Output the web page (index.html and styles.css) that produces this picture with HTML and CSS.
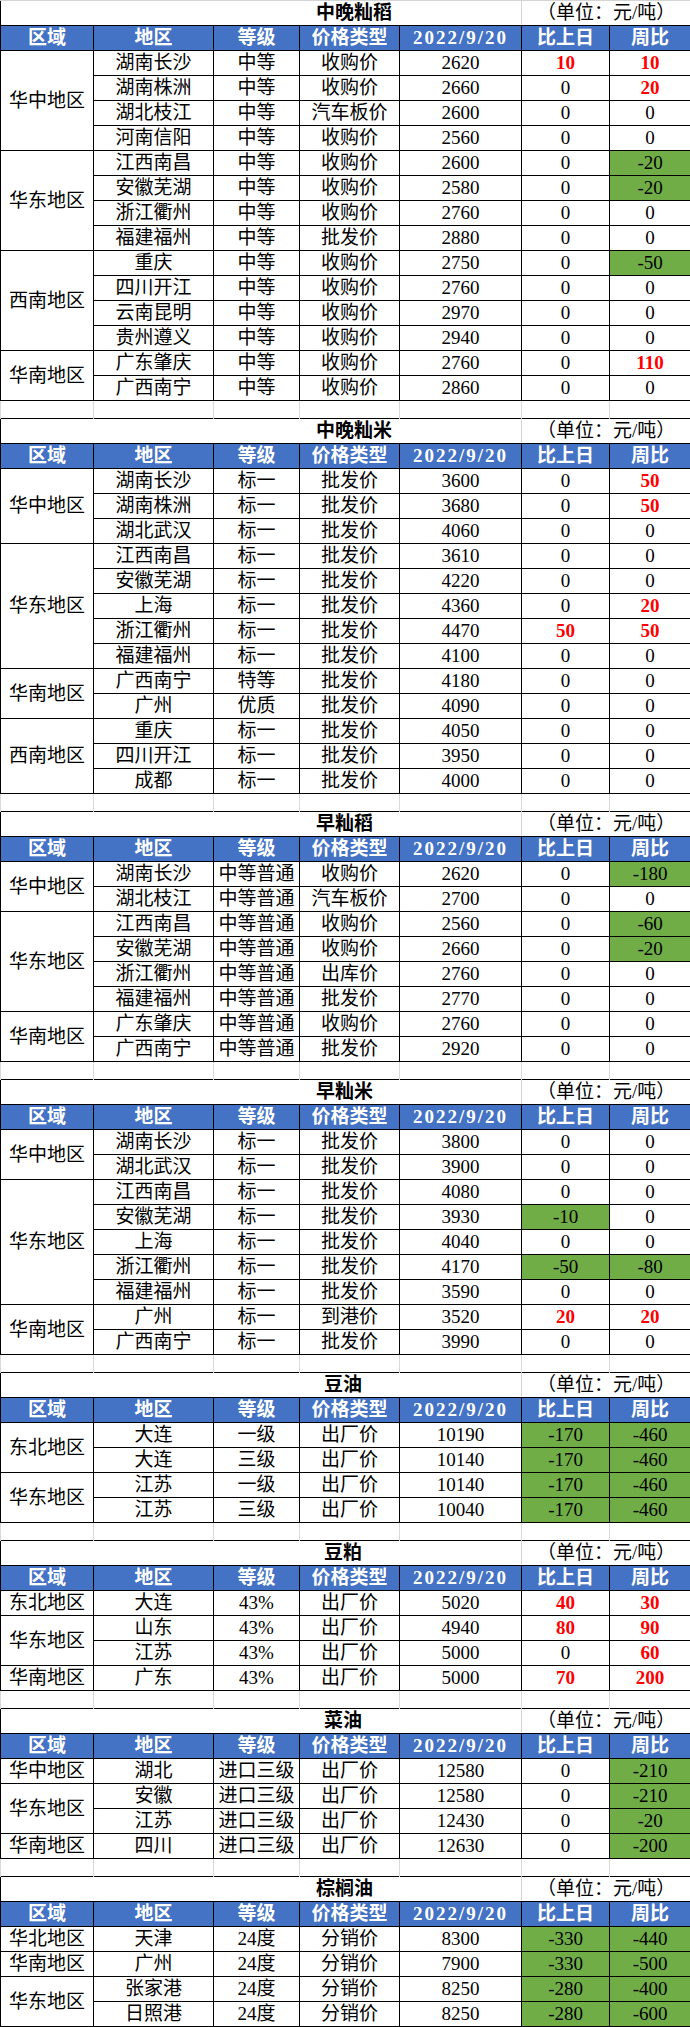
FILE: index.html
```html
<!DOCTYPE html>
<html lang="zh-CN">
<head>
<meta charset="utf-8">
<title>价格表</title>
<link rel="stylesheet" href="styles.css">
</head>
<body>
<table class="sheet">
<colgroup>
<col class="c1"><col class="c2"><col class="c3"><col class="c4"><col class="c5"><col class="c6"><col class="c7">
</colgroup>
<tbody>
<!-- 中晚籼稻 -->
<tr class="ttl first"><td colspan="5" class="name">中晚籼稻</td><td colspan="2" class="unit">（单位：元/吨）</td></tr>
<tr class="hd"><th>区域</th><th>地区</th><th>等级</th><th>价格类型</th><th class="dt">2022/9/20</th><th>比上日</th><th>周比</th></tr>
<tr><td rowspan="4">华中地区</td><td>湖南长沙</td><td>中等</td><td>收购价</td><td>2620</td><td class="up">10</td><td class="up">10</td></tr>
<tr><td>湖南株洲</td><td>中等</td><td>收购价</td><td>2660</td><td>0</td><td class="up">20</td></tr>
<tr><td>湖北枝江</td><td>中等</td><td>汽车板价</td><td>2600</td><td>0</td><td>0</td></tr>
<tr><td>河南信阳</td><td>中等</td><td>收购价</td><td>2560</td><td>0</td><td>0</td></tr>
<tr><td rowspan="4">华东地区</td><td>江西南昌</td><td>中等</td><td>收购价</td><td>2600</td><td>0</td><td class="dn">-20</td></tr>
<tr><td>安徽芜湖</td><td>中等</td><td>收购价</td><td>2580</td><td>0</td><td class="dn">-20</td></tr>
<tr><td>浙江衢州</td><td>中等</td><td>收购价</td><td>2760</td><td>0</td><td>0</td></tr>
<tr><td>福建福州</td><td>中等</td><td>批发价</td><td>2880</td><td>0</td><td>0</td></tr>
<tr><td rowspan="4">西南地区</td><td>重庆</td><td>中等</td><td>收购价</td><td>2750</td><td>0</td><td class="dn">-50</td></tr>
<tr><td>四川开江</td><td>中等</td><td>收购价</td><td>2760</td><td>0</td><td>0</td></tr>
<tr><td>云南昆明</td><td>中等</td><td>收购价</td><td>2970</td><td>0</td><td>0</td></tr>
<tr><td>贵州遵义</td><td>中等</td><td>收购价</td><td>2940</td><td>0</td><td>0</td></tr>
<tr><td rowspan="2">华南地区</td><td>广东肇庆</td><td>中等</td><td>收购价</td><td>2760</td><td>0</td><td class="up">110</td></tr>
<tr><td>广西南宁</td><td>中等</td><td>收购价</td><td>2860</td><td>0</td><td>0</td></tr>
<tr class="sp"><td></td><td></td><td></td><td></td><td></td><td></td><td></td></tr>
<!-- 中晚籼米 -->
<tr class="ttl"><td colspan="5" class="name">中晚籼米</td><td colspan="2" class="unit">（单位：元/吨）</td></tr>
<tr class="hd"><th>区域</th><th>地区</th><th>等级</th><th>价格类型</th><th class="dt">2022/9/20</th><th>比上日</th><th>周比</th></tr>
<tr><td rowspan="3">华中地区</td><td>湖南长沙</td><td>标一</td><td>批发价</td><td>3600</td><td>0</td><td class="up">50</td></tr>
<tr><td>湖南株洲</td><td>标一</td><td>批发价</td><td>3680</td><td>0</td><td class="up">50</td></tr>
<tr><td>湖北武汉</td><td>标一</td><td>批发价</td><td>4060</td><td>0</td><td>0</td></tr>
<tr><td rowspan="5">华东地区</td><td>江西南昌</td><td>标一</td><td>批发价</td><td>3610</td><td>0</td><td>0</td></tr>
<tr><td>安徽芜湖</td><td>标一</td><td>批发价</td><td>4220</td><td>0</td><td>0</td></tr>
<tr><td>上海</td><td>标一</td><td>批发价</td><td>4360</td><td>0</td><td class="up">20</td></tr>
<tr><td>浙江衢州</td><td>标一</td><td>批发价</td><td>4470</td><td class="up">50</td><td class="up">50</td></tr>
<tr><td>福建福州</td><td>标一</td><td>批发价</td><td>4100</td><td>0</td><td>0</td></tr>
<tr><td rowspan="2">华南地区</td><td>广西南宁</td><td>特等</td><td>批发价</td><td>4180</td><td>0</td><td>0</td></tr>
<tr><td>广州</td><td>优质</td><td>批发价</td><td>4090</td><td>0</td><td>0</td></tr>
<tr><td rowspan="3">西南地区</td><td>重庆</td><td>标一</td><td>批发价</td><td>4050</td><td>0</td><td>0</td></tr>
<tr><td>四川开江</td><td>标一</td><td>批发价</td><td>3950</td><td>0</td><td>0</td></tr>
<tr><td>成都</td><td>标一</td><td>批发价</td><td>4000</td><td>0</td><td>0</td></tr>
<tr class="sp"><td></td><td></td><td></td><td></td><td></td><td></td><td></td></tr>
<!-- 早籼稻 -->
<tr class="ttl"><td colspan="5" class="name">早籼稻</td><td colspan="2" class="unit">（单位：元/吨）</td></tr>
<tr class="hd"><th>区域</th><th>地区</th><th>等级</th><th>价格类型</th><th class="dt">2022/9/20</th><th>比上日</th><th>周比</th></tr>
<tr><td rowspan="2">华中地区</td><td>湖南长沙</td><td>中等普通</td><td>收购价</td><td>2620</td><td>0</td><td class="dn">-180</td></tr>
<tr><td>湖北枝江</td><td>中等普通</td><td>汽车板价</td><td>2700</td><td>0</td><td>0</td></tr>
<tr><td rowspan="4">华东地区</td><td>江西南昌</td><td>中等普通</td><td>收购价</td><td>2560</td><td>0</td><td class="dn">-60</td></tr>
<tr><td>安徽芜湖</td><td>中等普通</td><td>收购价</td><td>2660</td><td>0</td><td class="dn">-20</td></tr>
<tr><td>浙江衢州</td><td>中等普通</td><td>出库价</td><td>2760</td><td>0</td><td>0</td></tr>
<tr><td>福建福州</td><td>中等普通</td><td>批发价</td><td>2770</td><td>0</td><td>0</td></tr>
<tr><td rowspan="2">华南地区</td><td>广东肇庆</td><td>中等普通</td><td>收购价</td><td>2760</td><td>0</td><td>0</td></tr>
<tr><td>广西南宁</td><td>中等普通</td><td>批发价</td><td>2920</td><td>0</td><td>0</td></tr>
<tr class="sp"><td></td><td></td><td></td><td></td><td></td><td></td><td></td></tr>
<!-- 早籼米 -->
<tr class="ttl"><td colspan="5" class="name">早籼米</td><td colspan="2" class="unit">（单位：元/吨）</td></tr>
<tr class="hd"><th>区域</th><th>地区</th><th>等级</th><th>价格类型</th><th class="dt">2022/9/20</th><th>比上日</th><th>周比</th></tr>
<tr><td rowspan="2">华中地区</td><td>湖南长沙</td><td>标一</td><td>批发价</td><td>3800</td><td>0</td><td>0</td></tr>
<tr><td>湖北武汉</td><td>标一</td><td>批发价</td><td>3900</td><td>0</td><td>0</td></tr>
<tr><td rowspan="5">华东地区</td><td>江西南昌</td><td>标一</td><td>批发价</td><td>4080</td><td>0</td><td>0</td></tr>
<tr><td>安徽芜湖</td><td>标一</td><td>批发价</td><td>3930</td><td class="dn">-10</td><td>0</td></tr>
<tr><td>上海</td><td>标一</td><td>批发价</td><td>4040</td><td>0</td><td>0</td></tr>
<tr><td>浙江衢州</td><td>标一</td><td>批发价</td><td>4170</td><td class="dn">-50</td><td class="dn">-80</td></tr>
<tr><td>福建福州</td><td>标一</td><td>批发价</td><td>3590</td><td>0</td><td>0</td></tr>
<tr><td rowspan="2">华南地区</td><td>广州</td><td>标一</td><td>到港价</td><td>3520</td><td class="up">20</td><td class="up">20</td></tr>
<tr><td>广西南宁</td><td>标一</td><td>批发价</td><td>3990</td><td>0</td><td>0</td></tr>
<tr class="sp"><td></td><td></td><td></td><td></td><td></td><td></td><td></td></tr>
<!-- 豆油 -->
<tr class="ttl"><td colspan="5" class="name short">豆油</td><td colspan="2" class="unit">（单位：元/吨）</td></tr>
<tr class="hd"><th>区域</th><th>地区</th><th>等级</th><th>价格类型</th><th class="dt">2022/9/20</th><th>比上日</th><th>周比</th></tr>
<tr><td rowspan="2">东北地区</td><td>大连</td><td>一级</td><td>出厂价</td><td>10190</td><td class="dn">-170</td><td class="dn">-460</td></tr>
<tr><td>大连</td><td>三级</td><td>出厂价</td><td>10140</td><td class="dn">-170</td><td class="dn">-460</td></tr>
<tr><td rowspan="2">华东地区</td><td>江苏</td><td>一级</td><td>出厂价</td><td>10140</td><td class="dn">-170</td><td class="dn">-460</td></tr>
<tr><td>江苏</td><td>三级</td><td>出厂价</td><td>10040</td><td class="dn">-170</td><td class="dn">-460</td></tr>
<tr class="sp"><td></td><td></td><td></td><td></td><td></td><td></td><td></td></tr>
<!-- 豆粕 -->
<tr class="ttl"><td colspan="5" class="name short">豆粕</td><td colspan="2" class="unit">（单位：元/吨）</td></tr>
<tr class="hd"><th>区域</th><th>地区</th><th>等级</th><th>价格类型</th><th class="dt">2022/9/20</th><th>比上日</th><th>周比</th></tr>
<tr><td>东北地区</td><td>大连</td><td>43%</td><td>出厂价</td><td>5020</td><td class="up">40</td><td class="up">30</td></tr>
<tr><td rowspan="2">华东地区</td><td>山东</td><td>43%</td><td>出厂价</td><td>4940</td><td class="up">80</td><td class="up">90</td></tr>
<tr><td>江苏</td><td>43%</td><td>出厂价</td><td>5000</td><td>0</td><td class="up">60</td></tr>
<tr><td>华南地区</td><td>广东</td><td>43%</td><td>出厂价</td><td>5000</td><td class="up">70</td><td class="up">200</td></tr>
<tr class="sp"><td></td><td></td><td></td><td></td><td></td><td></td><td></td></tr>
<!-- 菜油 -->
<tr class="ttl"><td colspan="5" class="name short">菜油</td><td colspan="2" class="unit">（单位：元/吨）</td></tr>
<tr class="hd"><th>区域</th><th>地区</th><th>等级</th><th>价格类型</th><th class="dt">2022/9/20</th><th>比上日</th><th>周比</th></tr>
<tr><td>华中地区</td><td>湖北</td><td>进口三级</td><td>出厂价</td><td>12580</td><td>0</td><td class="dn">-210</td></tr>
<tr><td rowspan="2">华东地区</td><td>安徽</td><td>进口三级</td><td>出厂价</td><td>12580</td><td>0</td><td class="dn">-210</td></tr>
<tr><td>江苏</td><td>进口三级</td><td>出厂价</td><td>12430</td><td>0</td><td class="dn">-20</td></tr>
<tr><td>华南地区</td><td>四川</td><td>进口三级</td><td>出厂价</td><td>12630</td><td>0</td><td class="dn">-200</td></tr>
<tr class="sp"><td></td><td></td><td></td><td></td><td></td><td></td><td></td></tr>
<!-- 棕榈油 -->
<tr class="ttl"><td colspan="5" class="name">棕榈油</td><td colspan="2" class="unit">（单位：元/吨）</td></tr>
<tr class="hd"><th>区域</th><th>地区</th><th>等级</th><th>价格类型</th><th class="dt">2022/9/20</th><th>比上日</th><th>周比</th></tr>
<tr><td>华北地区</td><td>天津</td><td>24度</td><td>分销价</td><td>8300</td><td class="dn">-330</td><td class="dn">-440</td></tr>
<tr><td>华南地区</td><td>广州</td><td>24度</td><td>分销价</td><td>7900</td><td class="dn">-330</td><td class="dn">-500</td></tr>
<tr><td rowspan="2">华东地区</td><td>张家港</td><td>24度</td><td>分销价</td><td>8250</td><td class="dn">-280</td><td class="dn">-400</td></tr>
<tr><td>日照港</td><td>24度</td><td>分销价</td><td>8250</td><td class="dn">-280</td><td class="dn">-600</td></tr>
</tbody>
</table>
</body>
</html>
```

FILE: styles.css
```css
html, body {
  margin: 0;
  padding: 0;
  background: #ffffff;
}

.sheet {
  border-collapse: collapse;
  table-layout: fixed;
  width: 690px;
  font-family: "Liberation Serif", "Noto Sans CJK SC", serif;
  font-size: 19px;
  color: #000000;
}

.c1 { width: 93px; }
.c2 { width: 120px; }
.c3 { width: 86px; }
.c4 { width: 100px; }
.c5 { width: 122px; }
.c6 { width: 88px; }
.c7 { width: 81px; }

.sheet tr {
  height: 25px;
}

.sheet td,
.sheet th {
  border: 1px solid #000000;
  padding: 0;
  text-align: center;
  vertical-align: middle;
  white-space: nowrap;
  overflow: hidden;
  line-height: 22px;
  font-weight: normal;
}

/* title rows */
.sheet .ttl .name {
  text-align: left;
  padding-left: 315px;
  font-weight: bold;
  border-right: 1px solid #d4d4d4;
}

.sheet .ttl .name.short {
  padding-left: 323px;
}

.sheet .ttl .unit {
  border-left: 1px solid #d4d4d4;
}

.sheet .ttl.first td {
  border-top: 1px solid #d4d4d4;
}

/* header rows */
.sheet .hd th {
  background: #4472c4;
  color: #ffffff;
  font-weight: bold;
}

.sheet .hd .dt {
  letter-spacing: 2px;
}

/* value states */
.sheet .up {
  color: #ff0000;
  font-weight: bold;
}

.sheet .dn {
  background: #70ad47;
}

/* spacer rows between blocks */
.sheet tr.sp {
  height: 18px;
}

.sheet .sp td {
  border-top: none;
  border-bottom: none;
  border-left: 1px solid #d9d9d9;
  border-right: 1px solid #d9d9d9;
}
```
